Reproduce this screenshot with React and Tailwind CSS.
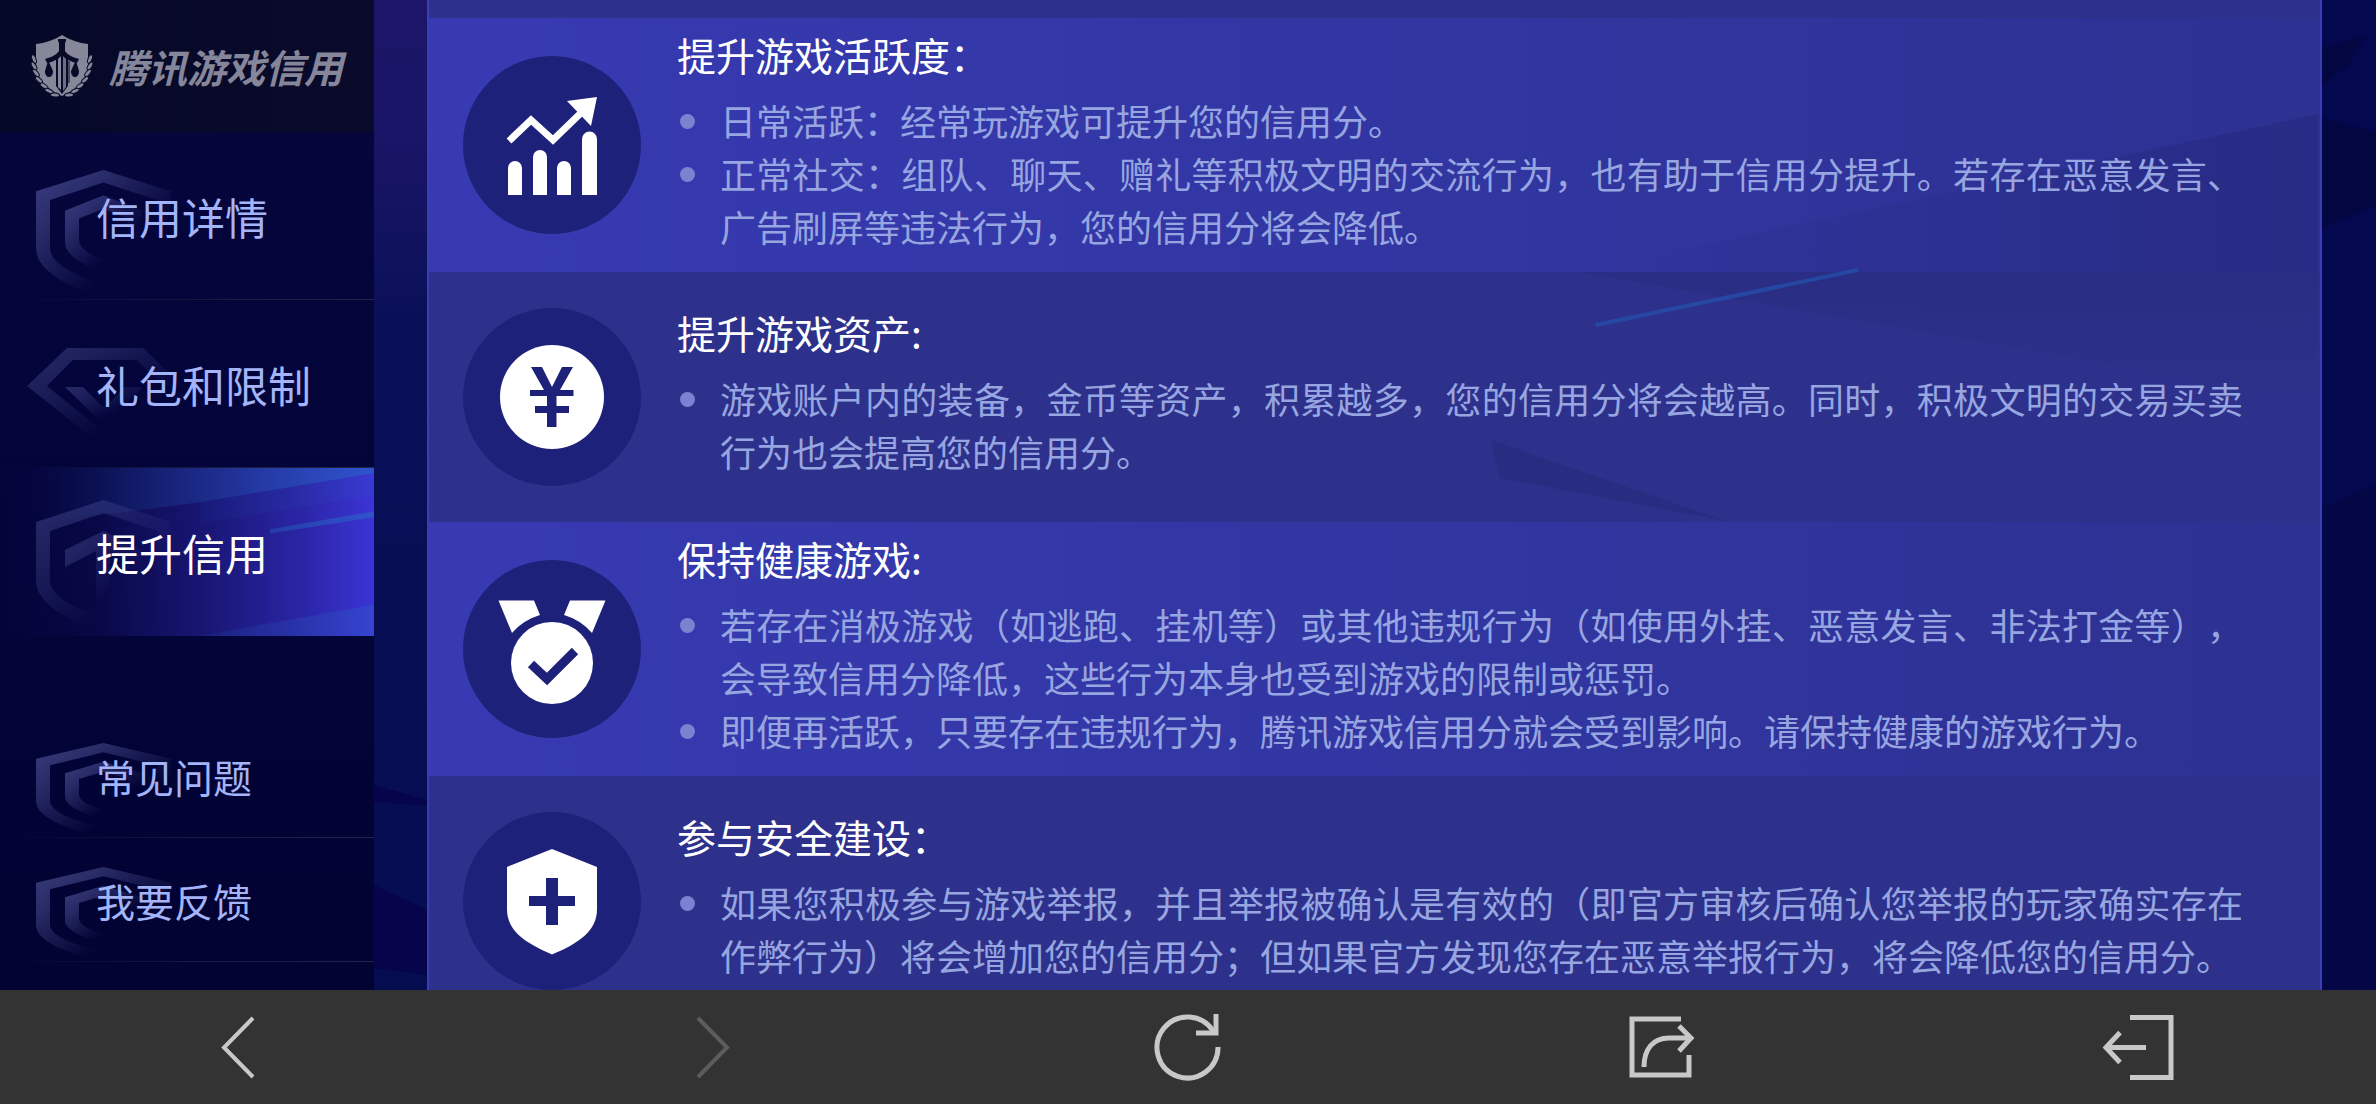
import React from "react";

const FONT = "font-['Noto_Sans_CJK_SC','Noto_Sans',sans-serif]";

function Logo() {
  const leaves = [
    [3, 25, 70],
    [3, 32, 60],
    [5, 39, 50],
    [8, 46, 42],
    [13, 52, 35],
    [18, 57, 25],
    [24, 61, 5],
  ];
  return (
    <svg className="h-16 w-[62px] shrink-0" viewBox="0 0 62 64" aria-hidden="true">
      <path
        d="M31 1 C39 6 48 9 57 10 V30 C57 44 47 55 31 62 C15 55 5 44 5 30 V10 C14 9 23 6 31 1Z"
        fill="#868799"
      />
      <path d="M27 5h8v2l-1 2v8c3 4 7 6 14 8l-2 4c-6-1-11-4-15-8-4 4-9 7-15 8l-2-4c7-2 11-4 14-8V9l-1-2z" fill="#080a28" />
      <path d="M25 24l6-4 6 4v28l-6 8-6-8z" fill="#080a28" />
      <path d="M27 25l3-3v34l-3-3z" fill="#868799" />
      <path d="M32 22l3 3v28l-3 4z" fill="#6d6e85" />
      <path d="M38 27v22" stroke="#080a28" strokeWidth="1" />
      <path d="M17 27l1 1 4 9c0 4-2 6-4 6s-4-2-4-6z" fill="#080a28" />
      <path d="M45 27l-1 1-4 9c0 4 2 6 4 6s4-2 4-6z" fill="#080a28" />
      {leaves.map(([x, y, r]) => (
        <g key={y}>
          <ellipse cx={x} cy={y} rx="4.5" ry="2" transform={`rotate(${r} ${x} ${y})`} fill="#868799" stroke="#080a28" strokeWidth="1" />
          <ellipse cx={62 - x} cy={y} rx="4.5" ry="2" transform={`rotate(${-r} ${62 - x} ${y})`} fill="#868799" stroke="#080a28" strokeWidth="1" />
        </g>
      ))}
    </svg>
  );
}

function Fade({ id, strength }) {
  return (
    <defs>
      <linearGradient id={id} x1="0" y1="0.1" x2="0.75" y2="0.9">
        <stop offset="0" stopColor="#6066b0" stopOpacity={strength} />
        <stop offset="0.25" stopColor="#6066b0" stopOpacity={strength * 0.75} />
        <stop offset="0.8" stopColor="#6066b0" stopOpacity="0" />
      </linearGradient>
    </defs>
  );
}

const OUTER_SHIELD =
  "M0 22L67.5 0L135 22V80C135 104 104 120 67.5 132C31 120 0 104 0 80ZM14 31V80C14 97 40 109 67.5 118C95 109 121 97 121 80V31L67.5 13Z";

function DoubleShield({ id, className }) {
  return (
    <svg className={className} viewBox="0 0 135 132" preserveAspectRatio="none" aria-hidden="true">
      <Fade id={id} strength={0.55} />
      <path fill={`url(#${id})`} fillRule="evenodd" d={OUTER_SHIELD} />
      <path
        fill={`url(#${id})`}
        fillRule="evenodd"
        d="M29 42L67.5 26L106 42V74C106 88 88 98 67.5 106C47 98 29 88 29 74ZM43 50V72C43 81 55 88 67.5 93C80 88 92 81 92 72V50L67.5 40Z"
      />
    </svg>
  );
}

function Gem({ id, className }) {
  return (
    <svg className={className} viewBox="0 0 156 100" aria-hidden="true">
      <Fade id={id} strength={0.36} />
      <path
        fill={`url(#${id})`}
        fillRule="evenodd"
        d="M0 38L40 0H116L156 38L78 100ZM20 38L78 85L136 38L110 12H46Z"
      />
      <path fill={`url(#${id})`} d="M38 39H56L77 60L98 39H116L77 77Z" />
    </svg>
  );
}

function ArrowShield({ id, className }) {
  return (
    <svg className={className} viewBox="0 0 135 132" preserveAspectRatio="none" aria-hidden="true">
      <Fade id={id} strength={0.36} />
      <path fill={`url(#${id})`} fillRule="evenodd" d={OUTER_SHIELD} />
      <path fill={`url(#${id})`} d="M29 50L67.5 31L106 50V67L74 51V112H60V51L29 67Z" />
    </svg>
  );
}

function ActiveGlow() {
  return (
    <svg className="absolute inset-0 h-full w-full" viewBox="0 0 374 167" preserveAspectRatio="none" aria-hidden="true">
      <defs>
        <linearGradient id="glow" x1="0" x2="1">
          <stop offset="0" stopColor="#3c34d6" stopOpacity="0" />
          <stop offset="0.25" stopColor="#3c34d6" stopOpacity="0.08" />
          <stop offset="0.55" stopColor="#3c34d6" stopOpacity="0.38" />
          <stop offset="0.8" stopColor="#3c34d6" stopOpacity="0.68" />
          <stop offset="1" stopColor="#3c34d6" />
        </linearGradient>
        <linearGradient id="ray" gradientUnits="userSpaceOnUse" x1="0" x2="374" y1="0" y2="0">
          <stop offset="0.1" stopColor="#2668c4" stopOpacity="0" />
          <stop offset="0.6" stopColor="#2668c4" stopOpacity="0.28" />
          <stop offset="1" stopColor="#2668c4" stopOpacity="0.6" />
        </linearGradient>
      </defs>
      <rect width="374" height="167" fill="url(#glow)" />
      <path d="M0 0H374V5L200 34L0 60Z" fill="url(#ray)" />
      <path d="M374 5V27L200 55V34Z" fill="url(#ray)" opacity="0.2" />
      <path d="M374 43V49L270 65V61Z" fill="url(#ray)" />
      <path d="M374 136V167H200L260 156Z" fill="url(#ray)" opacity="0.5" />
    </svg>
  );
}

function NavItem({ label, art, active, small, line = true }) {
  return (
    <li className={small ? "relative h-[124px]" : "relative h-[168px]"}>
      <button
        type="button"
        aria-current={active ? "page" : undefined}
        className="relative flex h-full w-full items-center pl-24 text-left"
      >
        {active && <ActiveGlow />}
        {art}
        <span
          className={
            (small ? "text-[39px] " : "text-[43px] ") +
            (active ? "text-white" : "text-[#a3b4f8]") +
            " relative leading-none whitespace-nowrap"
          }
        >
          {label}
        </span>
      </button>
      {line && <span className="absolute inset-x-0 bottom-0 h-px bg-linear-to-r from-transparent via-[#16183f] to-[#22244c]" />}
    </li>
  );
}

function Sidebar() {
  return (
    <aside className="flex w-[374px] shrink-0 flex-col overflow-hidden bg-linear-to-b from-[#06063c] via-[#03043a] to-[#020332]">
      <header className="flex h-[132px] shrink-0 items-center gap-4 bg-linear-to-r from-[#060828] to-[#0a0b2a] pl-[31px]">
        <Logo />
        <h1 className="text-[39px] leading-none font-bold whitespace-nowrap text-[#85869a] italic">腾讯游戏信用</h1>
      </header>
      <nav>
        <ul>
          <NavItem
            label="信用详情"
            art={<DoubleShield id="f1" className="absolute top-[38px] left-9 h-[128px] w-[135px]" />}
          />
          <NavItem
            label="礼包和限制"
            art={<Gem id="f2" className="absolute top-12 left-[27px] h-[100px] w-[156px]" />}
          />
          <NavItem
            label="提升信用"
            active
            line={false}
            art={<ArrowShield id="f3" className="absolute top-8 left-9 h-[132px] w-[135px]" />}
          />
        </ul>
        <ul className="mt-[78px]">
          <NavItem
            small
            label="常见问题"
            art={<DoubleShield id="f4" className="absolute top-[29px] left-9 h-[95px] w-[135px]" />}
          />
          <NavItem
            small
            label="我要反馈"
            art={<DoubleShield id="f5" className="absolute top-[29px] left-9 h-[95px] w-[135px]" />}
          />
        </ul>
      </nav>
    </aside>
  );
}

function Badge({ children }) {
  return (
    <svg className="h-[178px] w-[178px] shrink-0" viewBox="0 0 178 178" aria-hidden="true">
      <circle cx="89" cy="89" r="89" fill="#1e2179" />
      {children}
    </svg>
  );
}

function ChartBadge() {
  return (
    <Badge>
      <g fill="#fff">
        <path d="M45 139V112a7 7 0 0 1 14 0V139Z" />
        <path d="M70 139V101a7 7 0 0 1 14 0V139Z" />
        <path d="M94 139V112a7 7 0 0 1 14 0V139Z" />
        <path d="M119 139V83a7 7 0 0 1 15 0V139Z" />
        <path d="M134 41L104 45L128 70Z" />
      </g>
      <path d="M46 85L68 64L90 84L122 53" fill="none" stroke="#fff" strokeWidth="7" />
    </Badge>
  );
}

function YenBadge() {
  return (
    <Badge>
      <circle cx="89" cy="89" r="52" fill="#fff" />
      <path
        fill="#1e2179"
        d="M68 59H79L89 79L99 59H110L97 82H110.5V88H93.5V98H106V105H93.5V119H84V105H72V98H84V88H67V82H81Z"
      />
    </Badge>
  );
}

function MedalBadge() {
  return (
    <Badge>
      <circle cx="89" cy="103" r="41" fill="#fff" />
      <path fill="#fff" d="M35.5 40.5H71L77 55Q60 60 49 73ZM142.5 40.5H107L101 55Q118 60 129 73Z" />
      <path d="M68 104L84 119L112 91" fill="none" stroke="#1e2179" strokeWidth="9" />
    </Badge>
  );
}

function GuardBadge() {
  return (
    <Badge>
      <path fill="#fff" d="M89 37L134 55V97C134 119 116 131 89 142.5C62 131 44 119 44 97V55Z" />
      <path fill="#1e2179" d="M83 66H95V84H112V94H95V113H83V94H66V84H83Z" />
    </Badge>
  );
}

const SECTIONS = [
  {
    title: "提升游戏活跃度：",
    badge: <ChartBadge />,
    lit: true,
    points: [
      "日常活跃：经常玩游戏可提升您的信用分。",
      "正常社交：组队、聊天、赠礼等积极文明的交流行为，也有助于信用分提升。若存在恶意发言、广告刷屏等违法行为，您的信用分将会降低。",
    ],
  },
  {
    title: "提升游戏资产:",
    badge: <YenBadge />,
    points: [
      "游戏账户内的装备，金币等资产，积累越多，您的信用分将会越高。同时，积极文明的交易买卖行为也会提高您的信用分。",
    ],
  },
  {
    title: "保持健康游戏:",
    badge: <MedalBadge />,
    lit: true,
    points: [
      "若存在消极游戏（如逃跑、挂机等）或其他违规行为（如使用外挂、恶意发言、非法打金等），会导致信用分降低，这些行为本身也受到游戏的限制或惩罚。",
      "即便再活跃，只要存在违规行为，腾讯游戏信用分就会受到影响。请保持健康的游戏行为。",
    ],
  },
  {
    title: "参与安全建设：",
    badge: <GuardBadge />,
    points: [
      "如果您积极参与游戏举报，并且举报被确认是有效的（即官方审核后确认您举报的玩家确实存在作弊行为）将会增加您的信用分；但如果官方发现您存在恶意举报行为，将会降低您的信用分。",
    ],
  },
];

function Section({ title, badge, lit, points }) {
  return (
    <section
      className={
        "flex items-center gap-9 pr-[77px] pl-[34px] " +
        (lit
          ? "min-h-[254px] bg-linear-to-r from-[#373ab2] via-[#3236a2] to-[#2d3192]"
          : "min-h-[250px] bg-[#2d318b]")
      }
    >
      {badge}
      <div className="relative z-10 min-w-0 flex-1 pb-1">
        <h2 className="mb-5 text-[39px] leading-10 text-white">{title}</h2>
        <ul className="text-[36px] leading-[53px] text-[#97a5e0]">
          {points.map((p) => (
            <li key={p} className="flex gap-[25px] pl-[3px]">
              <span className="mt-5 h-[15px] w-[15px] shrink-0 rounded-full bg-[#7b82d2]" />
              <p className="min-w-0 flex-1 text-justify [text-spacing-trim:space-all]">{p}</p>
            </li>
          ))}
        </ul>
      </div>
    </section>
  );
}

function Backdrop() {
  return (
    <svg className="absolute inset-0 h-full w-full" viewBox="0 0 2002 990" preserveAspectRatio="none" aria-hidden="true">
      <defs>
        <linearGradient id="dusk" x1="0" x2="0" y1="0" y2="1">
          <stop offset="0" stopColor="#1d1668" />
          <stop offset="0.15" stopColor="#191566" />
          <stop offset="0.32" stopColor="#0a1058" />
          <stop offset="1" stopColor="#050c50" />
        </linearGradient>
      </defs>
      <rect width="1000" height="990" fill="url(#dusk)" />
      <rect x="1000" width="1002" height="990" fill="#04084e" />
      <path d="M0 785L53 800V806L0 802Z" fill="#06044a" />
      <path d="M0 885L53 910V975L0 968Z" fill="#06044a" />
      <path d="M1948 48L1992 36L1975 65L1948 85Z" fill="#040642" />
      <path d="M1948 118L2002 132V205L1948 228Z" fill="#040642" />
      <path d="M1948 508L2002 484V990H1948Z" fill="#040646" />
    </svg>
  );
}

function Facets() {
  return (
    <svg
      className="pointer-events-none absolute inset-0 h-full w-full"
      viewBox="0 0 1895 1026"
      preserveAspectRatio="none"
      aria-hidden="true"
    >
      <defs>
        <linearGradient id="facet" x1="0" x2="1">
          <stop offset="0" stopColor="#1b1f66" stopOpacity="0" />
          <stop offset="1" stopColor="#1b1f66" stopOpacity="0.3" />
        </linearGradient>
        <linearGradient id="facet-low" x1="0.6" x2="0.5" y1="0" y2="1">
          <stop offset="0" stopColor="#1b1f66" stopOpacity="0.22" />
          <stop offset="1" stopColor="#1b1f66" stopOpacity="0" />
        </linearGradient>
      </defs>
      <path d="M1893 114V272H1150Z" fill="url(#facet)" />
      <path d="M1150 272H1893V400Z" fill="url(#facet-low)" />
      <path d="M1169 325L1432 270" stroke="#2450ac" strokeOpacity="0.75" strokeWidth="4" />
      <path d="M1064 440L1300 521L1073 478Z" fill="#1b1f66" fillOpacity="0.22" />
    </svg>
  );
}

function Glyph({ children }) {
  return (
    <svg className="h-[72px] w-[72px]" viewBox="0 0 72 72" fill="none" stroke="currentColor" strokeWidth="5" aria-hidden="true">
      {children}
    </svg>
  );
}

const TOOLS = [
  { label: "后退", glyph: <path strokeWidth="4" d="M51 7L22 36.5L51 66" /> },
  { label: "前进", off: true, glyph: <path strokeWidth="4" d="M21 7L50 36.5L21 66" /> },
  {
    label: "刷新",
    glyph: (
      <>
        <path d="M66 36A30.500 30.500 0 1 1 61.500 20.500" />
        <path d="M64 3V22H44" />
      </>
    ),
  },
  {
    label: "分享",
    glyph: (
      <>
        <path d="M54 8H5V64H62V44" />
        <path d="M17 56C17 38 26 27 42 27H64" />
        <path d="M52 15L64 27L52 40" />
      </>
    ),
  },
  {
    label: "退出",
    glyph: (
      <>
        <path d="M28 6.500H69V66.500H28" />
        <path d="M44 36.500H4" />
        <path d="M18 21.500L4 36.500L18 51.500" />
      </>
    ),
  },
];

function Toolbar() {
  return (
    <footer className="grid h-[114px] shrink-0 grid-cols-5 bg-[#333333]">
      {TOOLS.map((t) => (
        <button
          key={t.label}
          type="button"
          aria-label={t.label}
          disabled={t.off}
          className={"flex items-center justify-center " + (t.off ? "text-[#5c5c5c]" : "text-[#c8c8c8]")}
        >
          <Glyph>{t.glyph}</Glyph>
        </button>
      ))}
    </footer>
  );
}

export default function App() {
  return (
    <div lang="zh-CN" className={"flex h-screen flex-col overflow-hidden bg-[#04084e] " + FONT}>
      <div className="flex min-h-0 flex-1">
        <Sidebar />
        <main className="relative min-w-0 flex-1 overflow-hidden pr-[54px] pl-[53px]">
          <Backdrop />
          <div className="relative border-x-2 border-[#393eb5]">
            <div className="h-[18px] bg-[#2d318b]" />
            {SECTIONS.map((s) => (
              <Section key={s.title} {...s} />
            ))}
            <Facets />
          </div>
        </main>
      </div>
      <Toolbar />
    </div>
  );
}
